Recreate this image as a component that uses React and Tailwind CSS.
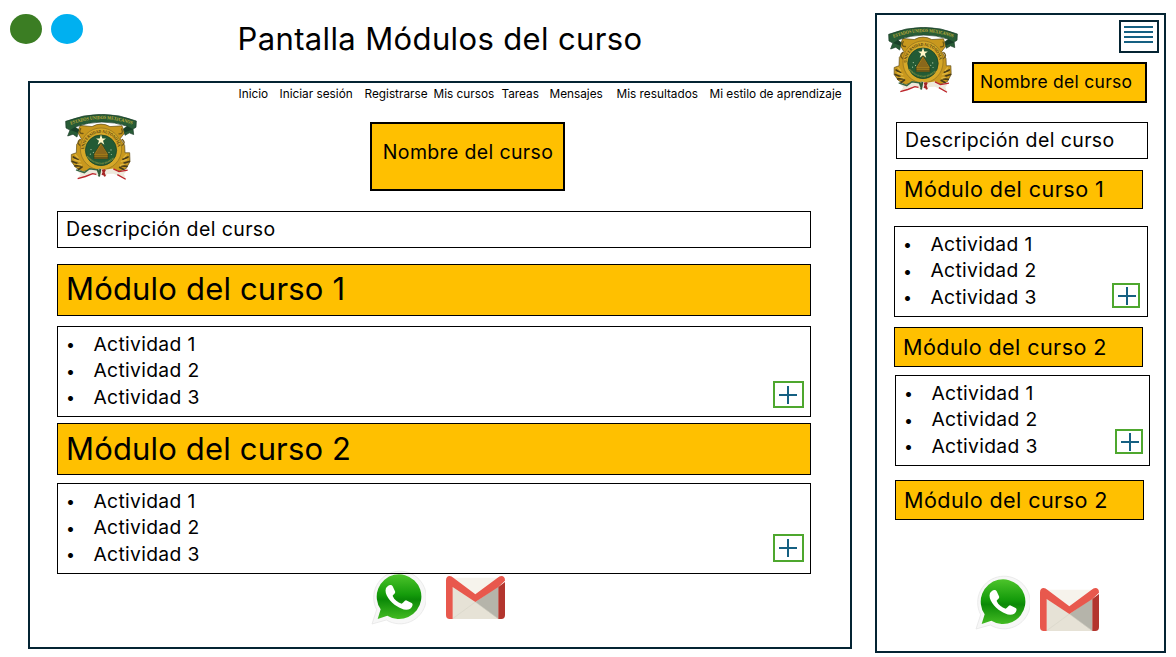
import React from "react";

function Crest({ id, className }) {
  return (
    <svg className={className} viewBox="45 40 216 192" preserveAspectRatio="none" aria-hidden="true">
      <defs>
        <path id={`${id}-banner`} d="M62 71 Q155 38 248 71" />
        <path id={`${id}-ring`} d="M102 142 A51 48 0 0 1 204 142" />
        <path id={`${id}-base`} d="M108 163 Q153 205 198 163" />
      </defs>
      <path d="M82 91 L91 73 L126 76 Q153 62 180 76 L216 74 L224 94 L211 110 L224 130 L225 151 L239 151 L240 176 L228 197 L208 204 L190 200 Q153 212 119 201 L98 205 L77 193 L64 176 L64 156 L79 151 L80 127 L94 111Z" fill="#c8981e" stroke="#5d4b18" strokeWidth="2" />
      <g fill="none" strokeLinecap="round">
        <path d="M92 82 Q84 96 99 96 M215 83 Q222 98 207 97 M90 113 Q78 122 91 131 M217 113 Q229 123 215 131" stroke="#705817" strokeWidth="4" />
        <path d="M70 163 L84 171 M67 176 L83 182 M75 189 L91 189 M85 199 L96 192 M234 163 L219 170 M238 176 L222 181 M231 190 L215 189 M221 199 L209 193" stroke="#493d18" strokeWidth="5" />
        <path d="M76 157 L84 165 M74 171 L90 176 M82 184 L94 186 M229 157 L221 165 M230 171 L214 176 M222 184 L211 187" stroke="#e1b63c" strokeWidth="4" />
      </g>
      <ellipse cx="153" cy="140" rx="62" ry="60" fill="#d6a828" stroke="#8c6e20" strokeWidth="2" />
      <ellipse cx="153" cy="144" rx="47" ry="44" fill="#235b35" stroke="#173f25" strokeWidth="2" />
      <path d="M153 99 L157 110 L168 110 L159 117 L163 128 L153 121 L143 128 L147 117 L138 110 L149 110Z" fill="#fff7c8" />
      <path d="M153 123 L174 155 L174 168 L132 168 L132 155Z" fill="#b78b18" stroke="#302c16" strokeWidth="1.5" />
      <path d="M154 127 L172 156 L134 156Z" fill="#8a681b" />
      <path d="M132 160 H174 M132 165 H174" stroke="#3b3318" strokeWidth="2" />
      <g fill="#b8d1ac">
        <circle cx="123" cy="142" r="1.8" /><circle cx="130" cy="150" r="1.5" />
        <circle cx="121" cy="155" r="1.5" /><circle cx="177" cy="150" r="1.5" />
        <circle cx="183" cy="143" r="1.8" /><circle cx="184" cy="156" r="1.5" />
      </g>
      <path d="M47 61 Q155 21 259 60 L258 78 L249 83 L251 99 L238 94 L225 101 L221 82 L232 75 Q155 50 75 77 L86 85 L81 106 L69 98 L53 103 L60 86 L48 80Z" fill="#285c36" stroke="#183a26" strokeWidth="2" />
      <path d="M75 77 L86 85 L83 94 L61 86 M232 75 L221 83 L225 92 L250 84" fill="#183f28" />
      <g fontFamily="Liberation Serif, serif" fontWeight="bold">
        <text fill="#c2b03a" fontSize="14"><textPath href={`#${id}-banner`} textLength="188" lengthAdjust="spacingAndGlyphs">ESTADOS UNIDOS MEXICANOS</textPath></text>
        <text fill="#54420f" fontSize="13"><textPath href={`#${id}-ring`} textLength="148" lengthAdjust="spacingAndGlyphs">UNIVERSIDAD AUTÓNOMA</textPath></text>
        <text fill="#b5ad46" fontSize="7"><textPath href={`#${id}-base`} textLength="95">PATRIA CIENCIA Y TRABAJO</textPath></text>
      </g>
      <path d="M78 200 L103 208 L119 197 L141 200 L150 196 L164 200 L189 196 L207 204 L233 200 L222 212 L228 229 L208 218 L190 211 L172 212 L166 220 L155 208 L146 219 L128 211 L106 219 L83 226 L92 213Z" fill="#eee9dc" />
      <path d="M78 200 L103 208 L119 197 L141 200" fill="none" stroke="#356442" strokeWidth="4" />
      <path d="M83 225 L106 219 L128 211 L139 213 M190 197 L207 205 L233 201 M202 214 L227 227" fill="none" stroke="#bd252c" strokeWidth="4" />
      <path d="M142 198 L148 213 M151 197 L147 219" stroke="#315b38" strokeWidth="6" />
      <path d="M158 199 L165 219 M165 199 L157 215" stroke="#a52626" strokeWidth="6" />
    </svg>
  );
}

function WhatsApp({ id, className }) {
  return (
    <svg className={className} viewBox="0 0 165 165" aria-label="WhatsApp">
      <defs>
        <linearGradient id={id} x1="0" y1="0" x2="0" y2="1">
          <stop offset="0" stopColor="#4dc42b" />
          <stop offset=".45" stopColor="#159c0b" />
          <stop offset=".56" stopColor="#0b8907" />
          <stop offset="1" stopColor="#43bb22" />
        </linearGradient>
      </defs>
      <path d="M3 162 L17 119 A79 79 0 1 1 46 150Z" fill="#f7f7f7" stroke="#e2e2e2" strokeWidth="2" />
      <path d="M20 147 L29 118 A67 67 0 1 1 49 137Z" fill={`url(#${id})`} />
      <path d="M50 49 C55 44 62 44 65 49 L72 64 C75 70 67 73 65 78 C70 90 80 97 92 101 C98 99 100 91 105 91 L122 99 C128 103 123 112 118 116 C105 124 89 116 78 109 C59 97 38 73 45 54Z" fill="#fff" />
    </svg>
  );
}

function Gmail({ className }) {
  return (
    <svg className={className} viewBox="0 0 177 129" aria-label="Gmail">
      <path d="M12 5 H165 V129 H12Z" fill="#f6f3ec" />
      <path d="M20 31 L88 78 L157 31 V129 H20Z" fill="#e6e2d6" />
      <path d="M88 78 L157 31 V129Z" fill="#b5b4aa" />
      <path d="M88 78 L20 128 M88 78 L157 128" stroke="#d3d0c5" strokeWidth="1.5" />
      <path d="M20 33 V129 H11 Q0 129 0 117 V14 Q0 0 11 0 Q17 0 22 5 L88 55 L155 5 Q160 0 166 0 Q177 0 177 14 L157 33 L88 78Z" fill="#e8584d" />
      <path d="M157 33 L177 18 V117 Q177 129 166 129 H157Z" fill="#b3352e" />
    </svg>
  );
}

function PlusButton({ className }) {
  return (
    <button className={`flex shrink-0 items-center border-2 border-[#4ea72e] bg-white pl-[4px] ${className}`} aria-label="Agregar">
      <svg className="h-[18px] w-[18px]" viewBox="0 0 18 18" shapeRendering="crispEdges">
        <path d="M0 9 H18 M9 0 V18" stroke="#156082" strokeWidth="2" />
      </svg>
    </button>
  );
}

function Activities({ className, buttonClass }) {
  return (
    <section className={`flex h-[91px] justify-between border border-black ${className}`}>
      <ul className="pt-[4px] pl-[8px] text-[19.3px] tracking-[0.32px]">
        {[1, 2, 3].map((n) => (
          <li key={n} className="flex h-[26.5px] items-center">
            <span className="w-[27.5px] text-[16px]">•</span>
            <span>Actividad {n}</span>
          </li>
        ))}
      </ul>
      <PlusButton className={buttonClass} />
    </section>
  );
}

function Bar({ className, children }) {
  return (
    <h2 className={`flex items-center border border-black bg-[#ffc000] font-normal ${className}`}>
      {children}
    </h2>
  );
}

const links = [
  ["Inicio", "w-[41px]"],
  ["Iniciar sesión", "w-[85px]"],
  ["Registrarse", "w-[69px]"],
  ["Mis cursos", "w-[68px]"],
  ["Tareas", "w-[48px]"],
  ["Mensajes", "w-[67px]"],
  ["Mis resultados", "w-[93px]"],
  ["Mi estilo de aprendizaje", "w-[134px]"],
];

export default function App() {
  return (
    <main className="flex h-[657px] w-[1176px] overflow-hidden bg-white font-['Inter',sans-serif] whitespace-nowrap text-black">
      <div className="w-[875px] shrink-0">
        <header className="flex h-[81px] pl-[10px]">
          <div className="flex w-[227.5px] gap-[9px] pt-[14px]">
            <span className="h-[30px] w-[32px] rounded-[50%] bg-[#3b7d23]" />
            <span className="h-[30px] w-[32px] rounded-[50%] bg-[#00b0f0]" />
          </div>
          <h1 className="pt-[19px] text-[31px] leading-[40px] font-normal tracking-[0.37px]">Pantalla Módulos del curso</h1>
        </header>

        <div className="ml-[28px] h-[568px] w-[824px] border-2 border-[#042433]">
          <nav className="flex h-[20px] pt-[3px] pl-[208.5px] text-[11.8px] leading-[16px]">
            {links.map(([label, width]) => (
              <a key={label} className={`shrink-0 ${width}`}>{label}</a>
            ))}
          </nav>
          <div className="flex h-[108px] pl-[35px]">
            <Crest id="main" className="mt-[11px] h-[67px] w-[72px]" />
            <div className="mt-[19px] ml-[233px] flex h-[69px] w-[195px] justify-center border-2 border-black bg-[#ffc000] pt-[14px] pl-[1px] text-[19.5px] leading-[28px] tracking-[0.35px]">
              Nombre del curso
            </div>
          </div>
          <div className="ml-[27px] w-[754px]">
            <div className="flex h-[37px] items-center border border-black pl-[8px] text-[19.5px] tracking-[0.4px]">Descripción del curso</div>
            <Bar className="mt-[16px] h-[52px] pb-[2px] pl-[8px] text-[31px] tracking-[0.18px]">Módulo del curso 1</Bar>
            <Activities className="mt-[10px]" buttonClass="mt-[54px] mr-[6px] h-[27px] w-[31px]" />
            <Bar className="mt-[6px] h-[52px] pl-[8px] text-[31px] tracking-[0.16px]">Módulo del curso 2</Bar>
            <Activities className="relative z-10 mt-[8px]" buttonClass="mt-[50px] mr-[6px] h-[28px] w-[31px]" />
          </div>
          <div className="-mt-[4px] flex pl-[341px]">
            <WhatsApp id="wa-main" className="h-[55px] w-[55px]" />
            <Gmail className="mt-[6px] ml-[20px] h-[43px] w-[59px]" />
          </div>
        </div>
      </div>

      <aside className="mt-[13px] h-[640px] w-[291px] shrink-0 border-2 border-[#042433]">
        <div className="flex h-[107px]">
          <Crest id="side" className="mt-[12px] ml-[11px] h-[67px] w-[70px] shrink-0" />
          <div className="ml-[14px] flex w-[187px] flex-col">
            <button className="mt-[5px] ml-[147px] flex h-[33px] w-[40px] flex-col gap-[3px] border-2 border-[#042433] pt-[4px] pl-[3px]" aria-label="Menú">
              <span className="h-[2px] w-[29px] shrink-0 bg-[#156082]" />
              <span className="h-[2px] w-[29px] shrink-0 bg-[#156082]" />
              <span className="h-[2px] w-[29px] shrink-0 bg-[#156082]" />
              <span className="h-[2px] w-[29px] shrink-0 bg-[#156082]" />
            </button>
            <div className="mt-[9px] flex h-[41px] w-[175px] items-center border-2 border-black bg-[#ffc000] pb-[1px] pl-[6px] text-[17.5px] tracking-[0.28px]">Nombre del curso</div>
          </div>
        </div>
        <div className="ml-[19px] flex h-[37px] w-[252px] items-center border border-black pl-[8px] text-[19.5px] tracking-[0.4px]">Descripción del curso</div>
        <Bar className="mt-[11px] ml-[18px] h-[39px] w-[248px] pl-[8px] text-[21.6px] tracking-[0.45px]">Módulo del curso 1</Bar>
        <Activities className="mt-[17px] ml-[17px] w-[254px]" buttonClass="mt-[56px] mr-[7px] h-[25px] w-[28px]" />
        <Bar className="mt-[10px] ml-[17px] h-[40px] w-[249px] pl-[8px] text-[21.6px] tracking-[0.4px]">Módulo del curso 2</Bar>
        <Activities className="mt-[8px] ml-[18px] w-[255px]" buttonClass="mt-[53px] mr-[6px] h-[25px] w-[28px]" />
        <Bar className="mt-[14px] ml-[18px] h-[40px] w-[249px] pl-[8px] text-[21.6px] tracking-[0.4px]">Módulo del curso 2</Bar>
        <div className="mt-[55px] flex pl-[98px]">
          <WhatsApp id="wa-side" className="h-[55px] w-[55px]" />
          <Gmail className="mt-[13px] ml-[10px] h-[43px] w-[59px]" />
        </div>
      </aside>
    </main>
  );
}
